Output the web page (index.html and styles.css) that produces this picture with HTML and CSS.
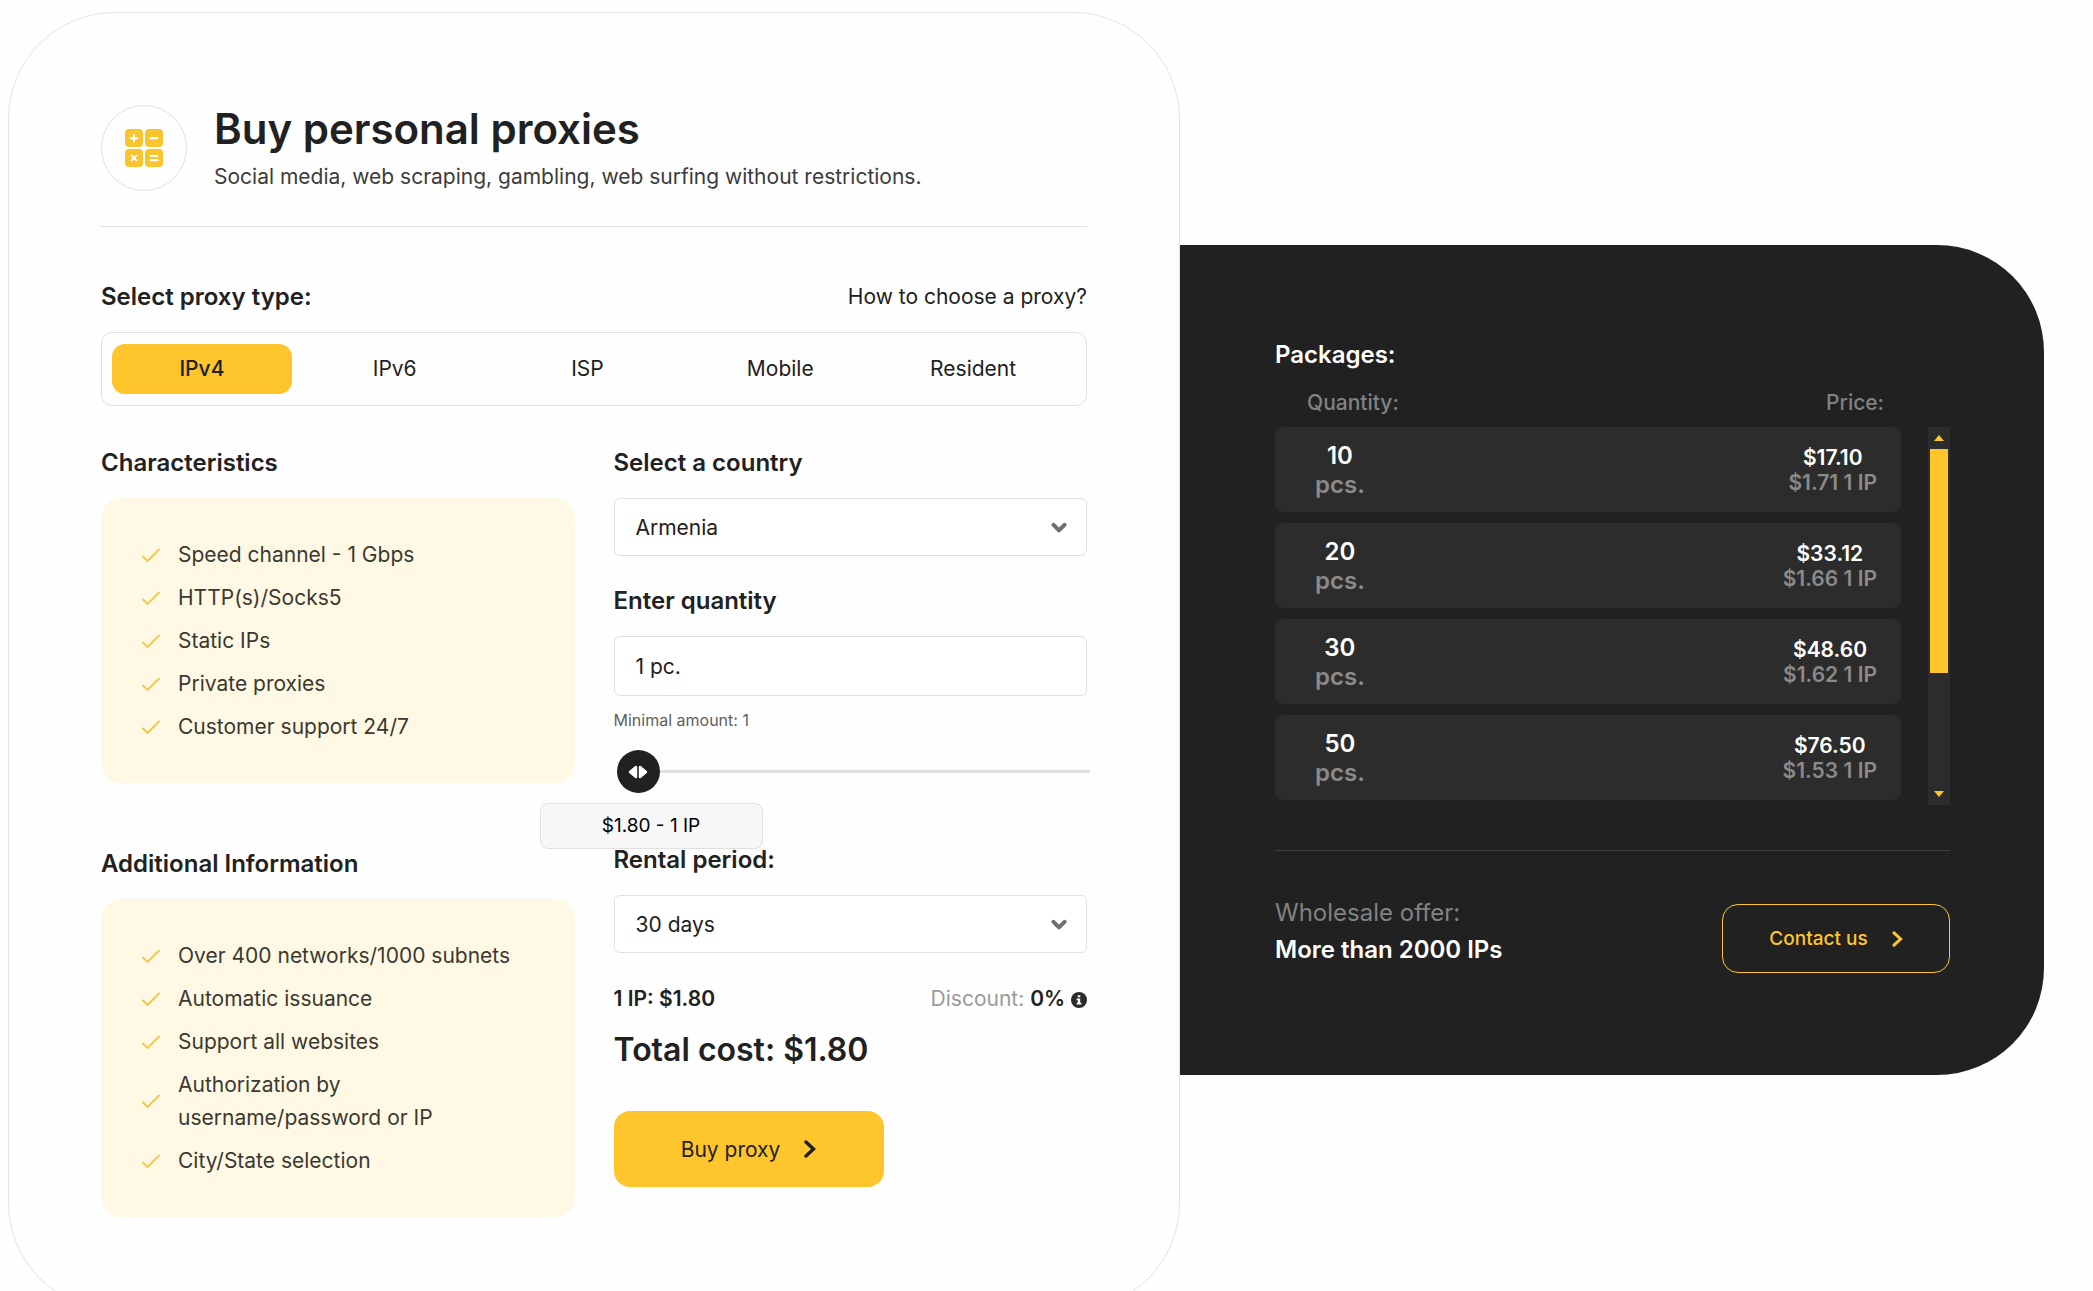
FILE: index.html
```html
<!DOCTYPE html>
<html lang="en">
<head>
  <meta charset="utf-8">
  <meta name="viewport" content="width=device-width, initial-scale=1">
  <title>Buy personal proxies</title>
  <link rel="stylesheet" href="styles.css">
</head>
<body>
  <svg class="sprite" aria-hidden="true">
    <symbol id="check" viewBox="0 0 20 16"><path d="M1.5 9 L6.5 14 L18.5 2" fill="none" stroke="currentColor" stroke-width="1.9"/></symbol>
    <symbol id="chevron-down" viewBox="0 0 16 12"><path d="M2.5 2.8 L8 8.4 L13.5 2.8" fill="none" stroke="currentColor" stroke-width="4" stroke-linecap="round" stroke-linejoin="round"/></symbol>
    <symbol id="chevron-right" viewBox="0 0 12 18"><path d="M2 2 L9.5 9 L2 16" fill="none" stroke="currentColor" stroke-width="3.4" stroke-linecap="round" stroke-linejoin="miter"/></symbol>
  </svg>

  <main class="page">
    <form class="card">
      <header class="card-header">
        <div class="logo">
          <svg width="38" height="38" viewBox="0 0 38 38" aria-hidden="true">
            <g fill="#f9c52f">
              <rect x="0" y="0" width="18" height="18" rx="4"/>
              <rect x="20" y="0" width="18" height="18" rx="4"/>
              <rect x="0" y="20" width="18" height="18" rx="4"/>
              <rect x="20" y="20" width="18" height="18" rx="4"/>
            </g>
            <g fill="none" stroke="#fff" stroke-width="2" stroke-linecap="round">
              <path d="M9 5.8v6.8M5.6 9.2h6.8M25.6 9.2h6.8"/>
              <path d="M6.6 26.6l4.8 4.8M11.4 26.6l-4.8 4.8M25.6 27h6.8M25.6 31.2h6.8"/>
            </g>
          </svg>
        </div>
        <div>
          <h1 class="title">Buy personal proxies</h1>
          <p class="subtitle">Social media, web scraping, gambling, web surfing without restrictions.</p>
        </div>
      </header>

      <div class="type-head">
        <h2 class="heading" id="type-label">Select proxy type:</h2>
        <a class="help" href="#">How to choose a proxy?</a>
      </div>
      <div class="tabs" role="radiogroup" aria-labelledby="type-label">
        <label class="tab"><input type="radio" name="type" checked><span>IPv4</span></label>
        <label class="tab"><input type="radio" name="type"><span>IPv6</span></label>
        <label class="tab"><input type="radio" name="type"><span>ISP</span></label>
        <label class="tab"><input type="radio" name="type"><span>Mobile</span></label>
        <label class="tab"><input type="radio" name="type"><span>Resident</span></label>
      </div>

      <div class="columns">
        <div class="info">
          <section>
            <h2 class="heading">Characteristics</h2>
            <ul class="features">
              <li><svg class="check"><use href="#check"/></svg>Speed channel - 1 Gbps</li>
              <li><svg class="check"><use href="#check"/></svg>HTTP(s)/Socks5</li>
              <li><svg class="check"><use href="#check"/></svg>Static IPs</li>
              <li><svg class="check"><use href="#check"/></svg>Private proxies</li>
              <li><svg class="check"><use href="#check"/></svg>Customer support 24/7</li>
            </ul>
          </section>
          <section>
            <h2 class="heading">Additional Information</h2>
            <ul class="features">
              <li><svg class="check"><use href="#check"/></svg>Over 400 networks/1000 subnets</li>
              <li><svg class="check"><use href="#check"/></svg>Automatic issuance</li>
              <li><svg class="check"><use href="#check"/></svg>Support all websites</li>
              <li><svg class="check"><use href="#check"/></svg>Authorization by<br>username/password or IP</li>
              <li><svg class="check"><use href="#check"/></svg>City/State selection</li>
            </ul>
          </section>
        </div>

        <div class="order">
          <label class="heading" for="country">Select a country</label>
          <div class="select">
            <select id="country" class="field"><option>Armenia</option></select>
            <svg class="select-arrow" aria-hidden="true"><use href="#chevron-down"/></svg>
          </div>

          <label class="heading next" for="quantity">Enter quantity</label>
          <input id="quantity" class="field" type="text" value="1 pc.">
          <p class="hint">Minimal amount: 1</p>
          <div class="slider">
            <input type="range" min="1" max="2000" value="1" aria-label="Quantity">
            <output class="tooltip" for="quantity">$1.80 - 1 IP</output>
          </div>

          <label class="heading rental" for="period">Rental period:</label>
          <div class="select">
            <select id="period" class="field"><option>30 days</option></select>
            <svg class="select-arrow" aria-hidden="true"><use href="#chevron-down"/></svg>
          </div>

          <div class="summary">
            <strong>1 IP: $1.80</strong>
            <span class="discount">Discount: <strong>0%</strong>
              <svg width="16" height="16" viewBox="0 0 16 16" aria-hidden="true"><circle cx="8" cy="8" r="8" fill="#2b2b2b"/><path d="M6.7 3.2h2.6v2H6.7zM5.6 6.6h3.6v4.2h1.2v1.6H5.6v-1.6h1.2V8.2H5.6z" fill="#fff"/></svg>
            </span>
          </div>
          <p class="total">Total cost: $1.80</p>
          <button class="buy" type="submit">Buy proxy <svg class="arrow" aria-hidden="true"><use href="#chevron-right"/></svg></button>
        </div>
      </div>
    </form>

    <aside class="packages">
      <h2 class="packages-title">Packages:</h2>
      <div class="scroll-area">
        <table class="price-list">
          <thead>
            <tr><th scope="col">Quantity:</th><th scope="col">Price:</th></tr>
          </thead>
          <tbody>
            <tr><td><b>10</b> pcs.</td><td><b>$17.10</b> $1.71 1 IP</td></tr>
            <tr><td><b>20</b> pcs.</td><td><b>$33.12</b> $1.66 1 IP</td></tr>
            <tr><td><b>30</b> pcs.</td><td><b>$48.60</b> $1.62 1 IP</td></tr>
            <tr><td><b>50</b> pcs.</td><td><b>$76.50</b> $1.53 1 IP</td></tr>
          </tbody>
        </table>
        <div class="scrollbar" aria-hidden="true">
          <svg class="scroll-step" viewBox="0 0 22 22"><path d="M6 14h10l-5-6z" fill="#ffc52c"/></svg>
          <div class="scroll-thumb"></div>
          <svg class="scroll-step" viewBox="0 0 22 22"><path d="M6 8h10l-5 6z" fill="#ffc52c"/></svg>
        </div>
      </div>
      <footer class="wholesale">
        <p>Wholesale offer:<br><strong>More than 2000 IPs</strong></p>
        <a class="contact" href="#">Contact us <svg class="arrow small" aria-hidden="true"><use href="#chevron-right"/></svg></a>
      </footer>
    </aside>
  </main>
</body>
</html>
```

FILE: styles.css
```css
* {
  box-sizing: border-box;
}

body,
h1,
h2,
p,
ul {
  margin: 0;
  padding: 0;
}

body {
  background: #fefefe;
  color: #212121;
  font: 21px/29px Inter, "Liberation Sans", sans-serif;
}

input,
select,
button {
  font: inherit;
  color: inherit;
}

strong {
  font-weight: 600;
}

.sprite {
  display: none;
}

.page {
  display: grid;
  grid-template-columns: 1172fr 864fr;
  align-items: start;
  padding: 12px 49px 0 8px;
}

/* Calculator card */

.card {
  padding: 92px;
  border: 1px solid #e4e4e4;
  border-radius: 107px;
}

.card-header {
  display: flex;
  gap: 27px;
  padding-bottom: 35px;
  border-bottom: 1px solid #e0e0e0;
}

.logo {
  display: grid;
  place-items: center;
  width: 86px;
  height: 86px;
  border: 1px solid #e0e0e0;
  border-radius: 50%;
}

.title {
  margin-bottom: 9px;
  font-size: 42px;
  font-weight: 600;
  line-height: 48px;
}

.subtitle {
  color: #3c3c3c;
}

.heading {
  display: block;
  font-size: 24px;
  font-weight: 600;
}

.type-head {
  display: flex;
  justify-content: space-between;
  margin: 55px 0 21px;
}

.help {
  color: inherit;
  text-decoration: none;
}

.tabs {
  display: grid;
  grid-template-columns: repeat(5, 1fr);
  padding: 11px 10px;
  border: 1px solid #e0e0e0;
  border-radius: 11px;
}

.tab {
  position: relative;
  margin-right: 13px;
  border-radius: 13px;
  line-height: 50px;
  text-align: center;
}

.tab input {
  position: absolute;
  inset: 0;
  margin: 0;
  appearance: none;
}

.tab:has(:checked) {
  background: #ffc52c;
  font-weight: 500;
}

.columns {
  display: grid;
  grid-template-columns: 1fr 1fr;
  gap: 39px;
  margin-top: 42px;
}

.info {
  display: grid;
  gap: 66px;
  align-content: start;
}

.features {
  display: grid;
  gap: 10px;
  margin-top: 21px;
  padding: 40px;
  border-radius: 20px;
  background: #fff8e5;
  color: #3b392f;
  line-height: 33px;
  list-style: none;
}

.features li {
  display: flex;
  align-items: center;
  gap: 17px;
}

.check {
  flex: none;
  width: 20px;
  height: 16px;
  color: #f3c64a;
}

.field {
  display: block;
  width: 100%;
  height: 58px;
  margin-top: 21px;
  padding: 0 21px;
  border: 1px solid #e0e0e0;
  border-radius: 6px;
  background: #fff;
  appearance: none;
}

input.field {
  height: 60px;
}

.select {
  position: relative;
}

.select-arrow {
  position: absolute;
  top: 24px;
  right: 20px;
  width: 16px;
  height: 12px;
  color: #6f6f6f;
  pointer-events: none;
}

.next {
  margin-top: 30px;
}

.hint {
  margin-top: 14px;
  color: #5f5f5f;
  font-size: 16px;
  line-height: 20px;
}

.slider {
  position: relative;
  margin: 20px -3px 0 3px;
}

.slider input {
  display: block;
  width: 100%;
  height: 43px;
  margin: 0;
  background: linear-gradient(#e0e0e0, #e0e0e0) center / 100% 3px no-repeat;
  appearance: none;
}

.slider input::-webkit-slider-thumb {
  width: 43px;
  height: 43px;
  border-radius: 50%;
  background: #212121 url("data:image/svg+xml,%3Csvg xmlns='http://www.w3.org/2000/svg' viewBox='0 0 20 14'%3E%3Cpath d='M2 7l6-5v10zM18 7l-6-5v10z' fill='%23fff' stroke='%23fff' stroke-width='2.4' stroke-linejoin='round'/%3E%3C/svg%3E") center / 20px 14px no-repeat;
  appearance: none;
}

.tooltip {
  position: absolute;
  top: 53px;
  left: -77px;
  width: 223px;
  border: 1px solid #e0e0e0;
  border-radius: 8px;
  background: #f7f7f7;
  color: #000;
  font-size: 19px;
  line-height: 44px;
  text-align: center;
}

.rental {
  margin-top: 52px;
}

.summary {
  display: flex;
  justify-content: space-between;
  margin-top: 31px;
}

.discount {
  color: #9a9a9a;
}

.discount strong {
  color: #212121;
}

.discount svg {
  vertical-align: -2px;
}

.total {
  margin: 17px 0 41px;
  font-size: 32px;
  font-weight: 600;
  line-height: 40px;
}

.buy {
  display: flex;
  align-items: center;
  justify-content: center;
  gap: 24px;
  width: 270px;
  height: 76px;
  border: 0;
  border-radius: 16px;
  background: #ffc52c;
}

.arrow {
  width: 12px;
  height: 18px;
}

.small {
  width: 11px;
  height: 16px;
}

/* Package prices */

.packages {
  margin-top: 233px;
  padding: 95px 94px 102px 95px;
  border-radius: 0 107px 107px 0;
  background: #212121;
  color: #828282;
}

.packages-title {
  color: #fff;
  font-size: 24px;
  font-weight: 600;
}

.scroll-area {
  display: flex;
  gap: 27px;
  margin-top: 19px;
}

.price-list {
  display: block;
  flex: 1;
}

.price-list thead {
  display: block;
  margin-bottom: 10px;
}

.price-list tbody {
  display: grid;
  gap: 11px;
}

.price-list tr {
  display: flex;
  align-items: center;
  justify-content: space-between;
}

.price-list th {
  padding: 0 17px 0 32px;
  font-size: 21px;
  font-weight: 500;
}

.price-list tbody tr {
  height: 85px;
  padding: 0 24px 0 40px;
  border-radius: 8px;
  background: #2c2c2c;
  font-weight: 600;
}

.price-list td {
  padding: 0;
  color: #8a8a8a;
  font-size: 21px;
  line-height: 25px;
  text-align: center;
}

.price-list td:first-child {
  font-size: 24px;
  line-height: 29px;
}

.price-list b {
  display: block;
  color: #fff;
  font-weight: 600;
}

.scrollbar {
  display: flex;
  flex-direction: column;
  width: 22px;
  margin: 39px 0 -5px;
  background: #2c2c2c;
}

.scroll-step {
  flex: none;
  width: 22px;
  height: 22px;
}

.scroll-thumb {
  height: 224px;
  margin: 0 2px auto;
  background: #ffc52c;
}

.wholesale {
  display: flex;
  align-items: flex-start;
  justify-content: space-between;
  margin-top: 50px;
  padding-top: 43px;
  border-top: 1px solid #3d3d3d;
  font-size: 24px;
  line-height: 37px;
}

.wholesale strong {
  color: #fff;
}

.contact {
  display: flex;
  align-items: center;
  justify-content: center;
  gap: 24px;
  width: 228px;
  height: 69px;
  margin-top: 10px;
  border: 1px solid #ffc52c;
  border-radius: 16px;
  color: #ffc52c;
  font-size: 19px;
  font-weight: 500;
  text-decoration: none;
}
```
